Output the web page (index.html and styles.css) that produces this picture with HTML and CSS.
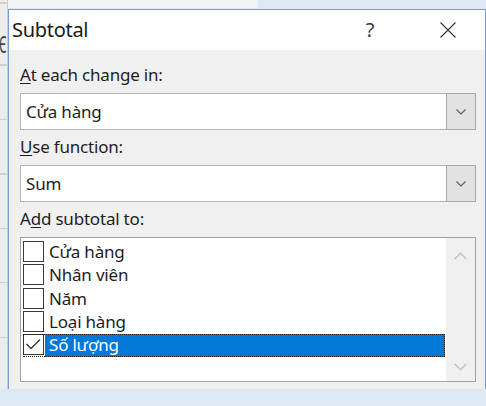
FILE: index.html
```html
<!DOCTYPE html>
<html lang="vi">
<head>
<meta charset="utf-8">
<title>Subtotal</title>
<link rel="stylesheet" href="styles.css">
</head>
<body>
<div class="desk">
  <div class="sheet"><span class="sheet-text">Є</span></div>
  <div class="topband"></div>

  <div class="dialog">
    <div class="titlebar">
      <span class="title">Subtotal</span>
      <span class="help">?</span>
      <span class="close">
        <svg width="16" height="16" viewBox="0 0 16 16"><path d="M0.5 0.5 L15.5 15.5 M15.5 0.5 L0.5 15.5" stroke="#333" stroke-width="1.1" fill="none"/></svg>
      </span>
    </div>

    <div class="body">
      <div class="lbl"><u>A</u>t each change in:</div>
      <div class="combo">
        <div class="field">Cửa hàng</div>
        <div class="drop"><svg width="10" height="6" viewBox="0 0 10 6"><path d="M0.5 0.5 L5 5 L9.5 0.5" stroke="#5a5a5a" stroke-width="1.1" fill="none"/></svg></div>
      </div>

      <div class="lbl"><u>U</u>se function:</div>
      <div class="combo">
        <div class="field">Sum</div>
        <div class="drop"><svg width="10" height="6" viewBox="0 0 10 6"><path d="M0.5 0.5 L5 5 L9.5 0.5" stroke="#5a5a5a" stroke-width="1.1" fill="none"/></svg></div>
      </div>

      <div class="lbl">A<u>d</u>d subtotal to:</div>
      <div class="list">
        <div class="items">
          <div class="item"><span class="box"></span><span class="txt">Cửa hàng</span></div>
          <div class="item"><span class="box"></span><span class="txt">Nhân viên</span></div>
          <div class="item"><span class="box"></span><span class="txt">Năm</span></div>
          <div class="item"><span class="box"></span><span class="txt">Loại hàng</span></div>
          <div class="item sel"><span class="box"><svg width="19" height="19" viewBox="0 0 19 19"><path d="M2.5 9 L7 13.5 L16 4.5" stroke="#333" stroke-width="1.3" fill="none"/></svg></span><span class="txt">Số lượng</span></div>
        </div>
        <div class="scroll">
          <svg width="13" height="8" viewBox="0 0 13 8"><path d="M0.8 7 L6.5 1.3 L12.2 7" stroke="#c3c3c3" stroke-width="1.5" fill="none"/></svg>
          <svg width="13" height="8" viewBox="0 0 13 8"><path d="M0.8 1 L6.5 6.7 L12.2 1" stroke="#c3c3c3" stroke-width="1.5" fill="none"/></svg>
        </div>
      </div>
    </div>
  </div>
</div>
</body>
</html>
```
FILE: styles.css
```css
* { box-sizing: border-box; }

html, body {
  margin: 0;
  padding: 0;
}

body {
  font-family: "Noto Sans", "Open Sans", sans-serif;
  color: #1e1e1e;
  background: #dce9f5;
}

.desk {
  position: relative;
  width: 486px;
  height: 406px;
  overflow: hidden;
  background: #dce9f5;
}

/* the sliver of worksheet left of the dialog */
.sheet {
  position: absolute;
  left: 0;
  top: 0;
  width: 8px;
  height: 389px;
  overflow: hidden;
  background-color: #ededed;
  background-image: repeating-linear-gradient(to bottom, transparent 0 53.5px, #cfcfcf 53.5px 54.5px);
  background-position: 0 11px;
  border-right: 1px solid #cdcdcd;
}

.sheet-text {
  position: absolute;
  left: -1px;
  top: 32px;
  display: block;
  font-size: 24px;
  line-height: 24px;
  color: #444;
  transform: scaleX(0.5);
  transform-origin: 0 0;
}

.topband {
  position: absolute;
  left: 8px;
  top: 0;
  width: 250px;
  height: 8px;
  background: #f2f4f7;
}

/* dialog window */
.dialog {
  position: absolute;
  left: 8px;
  top: 9px;
  width: 478px;
  height: 380px;
  border: 1px solid #6fa1d6;
  border-bottom: none;
  background: #f0f0f0;
  display: flex;
  flex-direction: column;
}

.titlebar {
  height: 40px;
  background: #fff;
  display: flex;
  align-items: center;
  padding-left: 3px;
  padding-right: 14px;
  flex-shrink: 0;
}

.title {
  flex: 1;
  font-size: 20px;
  letter-spacing: -0.3px;
  line-height: 40px;
  color: #1a1a1a;
}

.help {
  width: 46px;
  margin-right: 32px;
  text-align: center;
  font-size: 20px;
  line-height: 40px;
  color: #3a3a3a;
}

.close {
  width: 46px;
  height: 40px;
  display: flex;
  align-items: center;
  justify-content: center;
}

.body {
  flex: 1;
  padding: 13px 9px 0 11px;
}

.lbl {
  font-size: 17px;
  letter-spacing: -0.2px;
  line-height: 24px;
  margin-bottom: 6px;
  color: #1e1e1e;
}

.lbl u {
  text-underline-offset: 2px;
}

.combo {
  display: flex;
  height: 37px;
  margin-bottom: 5px;
}

.field {
  flex: 1;
  border: 1px solid #b4b4b4;
  border-right: none;
  background: #fff;
  font-size: 17px;
  letter-spacing: -0.2px;
  line-height: 35px;
  padding-left: 5px;
}

.drop {
  width: 30px;
  border: 1px solid #a8a8a8;
  background: #e2e2e2;
  display: flex;
  align-items: center;
  justify-content: center;
}

.list {
  height: 145px;
  border: 1px solid #a3a3a3;
  background: #fff;
  display: flex;
}

.items {
  flex: 1;
  padding: 3px 0 0 2px;
}

.item {
  display: flex;
  height: 23.3px;
  font-size: 17px;
  letter-spacing: -0.2px;
  line-height: 22px;
}

.box {
  width: 21px;
  height: 21px;
  border: 1px solid #3a3a3a;
  background: #fff;
  flex-shrink: 0;
  display: flex;
  align-items: center;
  justify-content: center;
}

.txt {
  flex: 1;
  padding-left: 4px;
  margin-left: 1px;
  margin-right: 1px;
  height: 23px;
}

.item.sel {
  outline: 1px dotted #222;
  outline-offset: -1px;
  margin-right: 1px;
}

.item.sel .txt {
  background: #0078d7;
  color: #fff;
  margin-right: 0;
}

.scroll {
  width: 29px;
  background: #f0f0f0;
  display: flex;
  flex-direction: column;
  align-items: center;
  justify-content: space-between;
  padding: 14px 0 10px;
}
```
